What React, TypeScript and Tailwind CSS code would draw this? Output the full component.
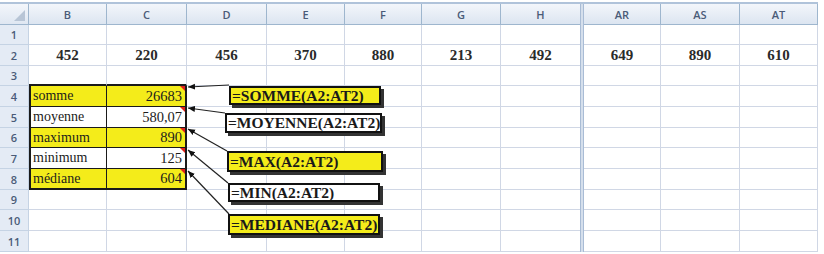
import React from 'react'

const cols = ['B', 'C', 'D', 'E', 'F', 'G', 'H', '', 'AR', 'AS', 'AT']
const row2 = ['452', '220', '456', '370', '880', '213', '492', '', '649', '890', '610']

const stats: Record<number, { label: string; value: string; yellow: boolean }> = {
  4: { label: 'somme', value: '26683', yellow: true },
  5: { label: 'moyenne', value: '580,07', yellow: false },
  6: { label: 'maximum', value: '890', yellow: true },
  7: { label: 'minimum', value: '125', yellow: false },
  8: { label: 'médiane', value: '604', yellow: true },
}

const callouts = [
  { text: '=SOMME(A2:AT2)', yellow: true, cls: 'left-[229px] top-[86px] w-[152px] h-[19px]' },
  { text: '=MOYENNE(A2:AT2)', yellow: false, cls: 'left-[225px] top-[113px] w-[157px] h-[20px]' },
  { text: '=MAX(A2:AT2)', yellow: true, cls: 'left-[227px] top-[151px] w-[156px] h-[21px]' },
  { text: '=MIN(A2:AT2)', yellow: false, cls: 'left-[228px] top-[183px] w-[152px] h-[19px]' },
  { text: '=MEDIANE(A2:AT2)', yellow: true, cls: 'left-[228px] top-[214px] w-[152px] h-[21px]' },
]

const arrows = [
  [229, 85, 188, 87],
  [225, 113, 188, 108],
  [227, 151, 188, 129],
  [228, 183, 188, 150],
  [229, 214, 188, 171],
]

function Cell({ row, col }: { row: number; col: number }) {
  const name = cols[col]
  if (name === '') {
    return <div className="bg-[#d5dfec] border-x border-[#a9bcd5]" />
  }
  const stat = stats[row]
  const inBlock = stat && (col === 0 || col === 1)
  if (inBlock) {
    const bg = stat.yellow ? 'bg-[#f4ec1a]' : 'bg-white'
    const bottom = row === 8 ? 'border-b-2' : 'border-b'
    if (col === 0) {
      return (
        <div className={`${bg} ${bottom} border-l-2 border-r border-[#1a1a1a] flex items-center pl-[2px] leading-none font-['Liberation_Serif',serif] text-[14px] text-[#1c1c1c]`}>
          {stat.label}
        </div>
      )
    }
    return (
      <div className={`relative ${bg} ${bottom} border-r-2 border-[#1a1a1a] flex items-center justify-end pr-[3px] leading-none font-['Liberation_Serif',serif] text-[14.5px] text-[#1c1c1c]`}>
        {stat.value}
        <span className="absolute top-0 right-0 w-0 h-0 border-t-[5px] border-l-[5px] border-t-[#e0201a] border-l-transparent" />
      </div>
    )
  }
  if (row === 3 && (col === 0 || col === 1)) {
    return <div className="border-r border-[#d0d7e5] border-b-2 border-b-[#1a1a1a]" />
  }
  const nextIsSep = cols[col + 1] === ''
  return (
    <div
      className={`flex items-center justify-center border-b border-[#d0d7e5] ${nextIsSep ? '' : 'border-r'} leading-none font-['Liberation_Serif',serif] text-[15px] font-bold text-[#2a2a2a]`}
    >
      {row === 2 ? row2[col] : ''}
    </div>
  )
}

export default function App() {
  const rows = Array.from({ length: 11 }, (_, i) => i + 1)
  return (
    <div className="relative w-[824px] h-[254px] bg-white overflow-hidden">
      <div className="w-[818px] pt-[2px]">
        <div className="h-[2px] bg-[#b0c3da]" />
        <div className="grid grid-cols-[29px_78px_80px_80px_78px_77px_79px_79px_4px_77px_79px_78px] grid-rows-[21px_20px_21px_20px_21px_21px_20px_21px_21px_20px_21px_21px]">
          {/* header row */}
          <div className="bg-gradient-to-b from-[#f3f6fb] to-[#dfe7f2] border-r border-b border-[#9eb6ce] flex items-end justify-end p-[3px]">
            <span className="w-0 h-0 border-b-[11px] border-l-[11px] border-b-[#b8c5d6] border-l-transparent" />
          </div>
          {cols.map((c, i) =>
            c === '' ? (
              <div key={i} className="bg-[#d5dfec] border-x border-[#a9bcd5]" />
            ) : (
              <div
                key={i}
                className={`bg-gradient-to-b from-[#f3f6fb] to-[#dce5f1] border-b border-[#9eb6ce] ${cols[i + 1] === '' ? '' : 'border-r'} flex items-center justify-center leading-none font-['Open_Sans','Liberation_Sans',sans-serif] text-[11px] font-semibold text-[#4a5b78]`}
              >
                {c}
              </div>
            )
          )}
          {rows.map((row) => (
            <React.Fragment key={row}>
              <div className="bg-[#e4ebf5] border-r border-b border-[#c5d3e4] flex items-center justify-center leading-none font-['Open_Sans','Liberation_Sans',sans-serif] text-[11px] font-semibold text-[#4a5b78]">
                {row}
              </div>
              {cols.map((_, ci) => (
                <Cell key={ci} row={row} col={ci} />
              ))}
            </React.Fragment>
          ))}
        </div>
      </div>

      <svg className="absolute inset-0 pointer-events-none" width="824" height="254">
        <defs>
          <marker id="ah" markerWidth="8" markerHeight="8" refX="7" refY="4" orient="auto" markerUnits="userSpaceOnUse">
            <path d="M0,1 L7,4 L0,7 Z" fill="#111" />
          </marker>
        </defs>
        {arrows.map(([x1, y1, x2, y2], i) => (
          <line key={i} x1={x1} y1={y1} x2={x2} y2={y2} stroke="#222" strokeWidth="1.2" markerEnd="url(#ah)" />
        ))}
      </svg>

      {callouts.map((c) => (
        <div
          key={c.text}
          className={`absolute ${c.cls} ${c.yellow ? 'bg-[#f4ec1a]' : 'bg-white'} border-2 border-[#111] shadow-[3px_3px_0_#333] flex items-center pl-[1px] overflow-hidden whitespace-nowrap leading-none font-['Liberation_Serif',serif] text-[15.5px] font-bold text-[#1a1a1a]`}
        >
          {c.text}
        </div>
      ))}
    </div>
  )
}
